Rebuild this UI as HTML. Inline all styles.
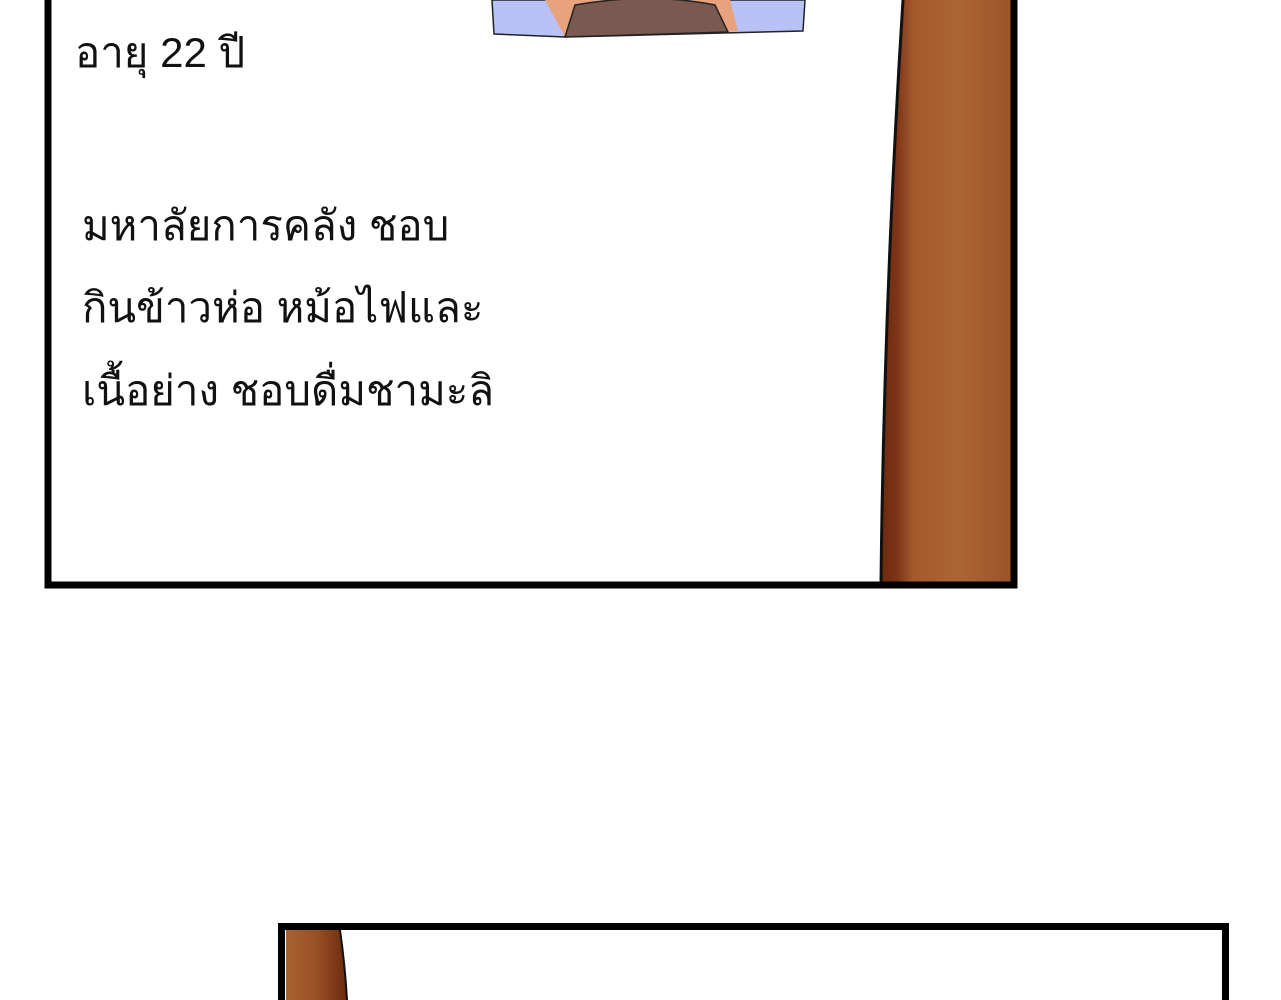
<!DOCTYPE html>
<html><head><meta charset="utf-8"><style>
html,body{margin:0;padding:0;background:#fff;width:1281px;height:1000px;overflow:hidden}
.t{position:absolute;font-family:"Liberation Sans","Noto Sans CJK SC",sans-serif;font-size:42px;color:#111;white-space:nowrap;line-height:1}
</style></head><body>
<svg width="1281" height="1000" style="position:absolute;left:0;top:0">
<defs>
<linearGradient id="w" x1="0" x2="1"><stop offset="0" stop-color="#6b2a10"/><stop offset="0.12" stop-color="#7d3416"/><stop offset="0.25" stop-color="#a45a2c"/><stop offset="0.6" stop-color="#ad6434"/><stop offset="1" stop-color="#9c532a"/></linearGradient>
<linearGradient id="w2" x1="0" x2="1"><stop offset="0" stop-color="#a8612f"/><stop offset="0.5" stop-color="#9a5025"/><stop offset="1" stop-color="#6b2a10"/></linearGradient>
</defs>
<!-- top image fragment -->
<path d="M492 0 L805 0 L803 31 L565 37 L494 34 Z" fill="#b9c2f6" stroke="#222" stroke-width="1.5"/>
<path d="M545 0 L730 0 L738 31 L565 37 Z" fill="#e9a27e"/>
<path d="M575 5 Q650 -8 715 5 L728 32 L565 37 Z" fill="#7a5a50" stroke="#222" stroke-width="1.5"/>
<!-- wood pole top panel -->
<path d="M903 0 L1011 0 L1011 583 L881 583 Q884 300 903 0 Z" fill="url(#w)"/>
<path d="M903 0 Q884 300 881 583" fill="none" stroke="#111" stroke-width="3"/>
<!-- top panel border -->
<path d="M48 0 L48 585 L1014 585 L1014 0" fill="none" stroke="#000" stroke-width="7"/>
<!-- bottom panel -->
<path d="M286 930 L340 930 Q345 965 347 1000 L286 1000 Z" fill="url(#w2)"/>
<path d="M340 930 Q345 965 347 1000" fill="none" stroke="#111" stroke-width="2"/>
<path d="M281.5 1000 L281.5 926.5 L1225.5 926.5 L1225.5 1000" fill="none" stroke="#000" stroke-width="7"/>
</svg>
<div class="t" style="left:75px;top:32px">อายุ 22 ปี</div>
<div class="t" style="left:82px;top:205px">มหาลัยการคลัง ชอบ</div>
<div class="t" style="left:82px;top:287px">กินข้าวห่อ หม้อไฟและ</div>
<div class="t" style="left:82px;top:370px">เนื้อย่าง ชอบดื่มชามะลิ</div>
</body></html>
